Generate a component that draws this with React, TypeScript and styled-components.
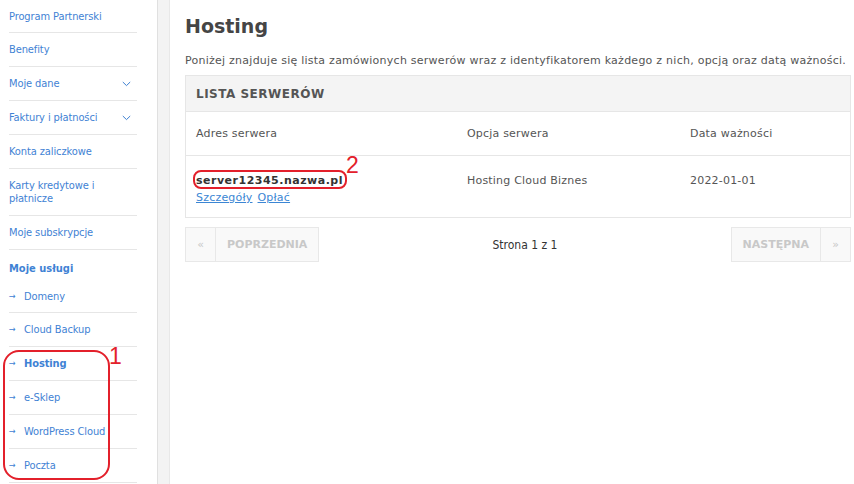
import React from "react";
import styled, { createGlobalStyle } from "styled-components";

const GlobalStyle = createGlobalStyle`
  html, body {
    margin: 0;
    padding: 0;
    background: #ffffff;
  }
  body {
    font-family: "DejaVu Sans", Verdana, sans-serif;
    color: #555555;
  }
  * {
    box-sizing: border-box;
  }
`;

interface MenuItem {
  label: string;
  chevron?: boolean;
  sub?: boolean;
  active?: boolean;
}

const topItems: MenuItem[] = [
  { label: "Program Partnerski" },
  { label: "Benefity" },
  { label: "Moje dane", chevron: true },
  { label: "Faktury i płatności", chevron: true },
  { label: "Konta zaliczkowe" },
  { label: "Karty kredytowe i płatnicze" },
  { label: "Moje subskrypcje" },
];

const serviceItems: MenuItem[] = [
  { label: "Domeny", sub: true },
  { label: "Cloud Backup", sub: true },
  { label: "Hosting", sub: true, active: true },
  { label: "e-Sklep", sub: true },
  { label: "WordPress Cloud", sub: true },
  { label: "Poczta", sub: true },
];

const Chevron = () => (
  <svg width="9" height="6" viewBox="0 0 9 6">
    <path d="M0.8 1 L4.5 4.6 L8.2 1" fill="none" stroke="#3c7fd1" strokeWidth="1" />
  </svg>
);

const App: React.FC = () => {
  return (
    <>
      <GlobalStyle />
      <Page>
        <Sidebar>
          {topItems.map((item, i) => (
            <NavItem key={item.label} $top={i === 0 ? 10 : 10} $bottom={i === 0 ? 9 : 10}>
              <NavLabel>{item.label}</NavLabel>
              {item.chevron && <Chevron />}
            </NavItem>
          ))}
          <GroupTitle>Moje usługi</GroupTitle>
          {serviceItems.map((item, i) => (
            <NavItem key={item.label} $top={i === 0 ? 9 : 10} $bottom={i === 0 ? 9 : 10}>
              <SubArrow>→</SubArrow>
              <NavLabel $active={item.active}>{item.label}</NavLabel>
            </NavItem>
          ))}
          <MarkFrame $left={3} $top={350} $width={107} $height={130} $radius={16} />
          <MarkNumber $left={109} $top={343}>1</MarkNumber>
        </Sidebar>
        <Divider />
        <Main>
          <Title>Hosting</Title>
          <Lead>
            Poniżej znajduje się lista zamówionych serwerów wraz z identyfikatorem
            każdego z nich, opcją oraz datą ważności.
          </Lead>
          <Panel>
            <PanelHeader>LISTA SERWERÓW</PanelHeader>
            <HeadRow>
              <Cell>Adres serwera</Cell>
              <Cell>Opcja serwera</Cell>
              <Cell>Data ważności</Cell>
            </HeadRow>
            <DataRow>
              <Cell>
                <ServerName>server12345.nazwa.pl</ServerName>
                <Links>
                  <Link href="#">Szczegóły</Link>
                  <Link href="#">Opłać</Link>
                </Links>
                <MarkFrame $left={7} $top={-3} $width={154} $height={19} $radius={8} />
                <MarkNumber $left={160} $top={-21}>2</MarkNumber>
              </Cell>
              <Cell>Hosting Cloud Biznes</Cell>
              <Cell>2022-01-01</Cell>
            </DataRow>
          </Panel>
          <Pager>
            <PagerGroup>
              <PageButton $narrow>«</PageButton>
              <PageButton>POPRZEDNIA</PageButton>
            </PagerGroup>
            <PageInfo>Strona 1 z 1</PageInfo>
            <PagerGroup>
              <PageButton>NASTĘPNA</PageButton>
              <PageButton $narrow>»</PageButton>
            </PagerGroup>
          </Pager>
        </Main>
      </Page>
    </>
  );
};

export default App;

const Page = styled.div`
  display: flex;
  width: 854px;
  height: 484px;
  overflow: hidden;
`;

const Sidebar = styled.nav`
  position: relative;
  width: 157px;
  flex-shrink: 0;
  padding: 0 20px 0 9px;
  font-family: "DejaVu Sans Condensed", Tahoma, sans-serif;
  font-size: 11px;
  color: #3f82d4;
`;

const NavItem = styled.div<{ $top: number; $bottom: number }>`
  display: flex;
  align-items: center;
  justify-content: space-between;
  padding: ${(p) => p.$top}px 6px ${(p) => p.$bottom}px 0;
  line-height: 13px;
  border-bottom: 1px solid #e6e6e6;
  letter-spacing: -0.1px;
`;

const NavLabel = styled.span<{ $active?: boolean }>`
  flex: 1;
  padding-right: 8px;
  font-weight: ${(p) => (p.$active ? 700 : 400)};
`;

const SubArrow = styled.span`
  width: 15px;
  flex-shrink: 0;
  font-size: 9px;
`;

const GroupTitle = styled.div`
  height: 31px;
  padding-top: 12px;
  line-height: 13px;
  font-weight: 700;
`;

const Divider = styled.div`
  width: 13px;
  flex-shrink: 0;
  background: #f3f3f3;
  border-left: 1px solid #e0e0e0;
  border-right: 1px solid #e8e8e8;
`;

const Main = styled.main`
  flex: 1;
  padding: 14px 3px 0 15px;
`;

const Title = styled.h1`
  margin: 0;
  font-size: 19px;
  line-height: 24px;
  font-weight: 700;
  color: #454545;
`;

const Lead = styled.p`
  margin: 15px 0 0;
  font-size: 11px;
  line-height: 15px;
  letter-spacing: 0.25px;
  color: #555555;
  white-space: nowrap;
`;

const Panel = styled.section`
  margin-top: 7px;
  border: 1px solid #e6e6e6;
`;

const PanelHeader = styled.div`
  height: 36px;
  display: flex;
  align-items: center;
  padding-left: 10px;
  background: #f4f4f4;
  border-bottom: 1px solid #e6e6e6;
  font-size: 12px;
  font-weight: 700;
  letter-spacing: 0.5px;
  color: #555555;
`;

const HeadRow = styled.div`
  display: grid;
  grid-template-columns: 271px 223px 1fr;
  height: 44px;
  align-items: center;
  border-bottom: 1px solid #e6e6e6;
  font-size: 11px;
  letter-spacing: 0.2px;
  color: #555555;
`;

const DataRow = styled.div`
  display: grid;
  grid-template-columns: 271px 223px 1fr;
  height: 61px;
  align-items: start;
  padding-top: 17px;
  font-size: 11px;
  line-height: 16px;
  letter-spacing: 0.2px;
  color: #555555;
`;

const Cell = styled.div`
  position: relative;
  padding-left: 10px;
`;

const ServerName = styled.div`
  font-weight: 700;
  font-size: 11px;
  letter-spacing: 0.5px;
  color: #333333;
`;

const Links = styled.div`
  display: flex;
  gap: 5px;
  line-height: 18px;
`;

const Link = styled.a`
  color: #3b86d4;
  text-decoration: underline;
`;

const MarkFrame = styled.div<{ $left: number; $top: number; $width: number; $height: number; $radius: number }>`
  position: absolute;
  left: ${(p) => p.$left}px;
  top: ${(p) => p.$top}px;
  width: ${(p) => p.$width}px;
  height: ${(p) => p.$height}px;
  border: 2px solid #e3202b;
  border-radius: ${(p) => p.$radius}px;
  pointer-events: none;
`;

const MarkNumber = styled.span<{ $left: number; $top: number }>`
  position: absolute;
  left: ${(p) => p.$left}px;
  top: ${(p) => p.$top}px;
  font-family: "Liberation Sans", Arial, sans-serif;
  font-size: 23px;
  line-height: 26px;
  color: #e3202b;
`;

const Pager = styled.div`
  display: flex;
  align-items: center;
  margin-top: 9px;
`;

const PagerGroup = styled.div`
  display: flex;
`;

const PageButton = styled.div<{ $narrow?: boolean }>`
  height: 35px;
  display: flex;
  align-items: center;
  justify-content: center;
  padding: 0 ${(p) => (p.$narrow ? "0" : "11px")};
  width: ${(p) => (p.$narrow ? "31px" : "auto")};
  background: #f9f9f9;
  border: 1px solid #e8e8e8;
  margin-left: -1px;
  font-size: 11px;
  font-weight: ${(p) => (p.$narrow ? 400 : 700)};
  color: #c8c8c8;

  &:first-child {
    margin-left: 0;
  }
`;

const PageInfo = styled.div`
  flex: 1;
  text-align: center;
  font-family: "DejaVu Sans Condensed", Tahoma, sans-serif;
  font-size: 12px;
  color: #333333;
`;
